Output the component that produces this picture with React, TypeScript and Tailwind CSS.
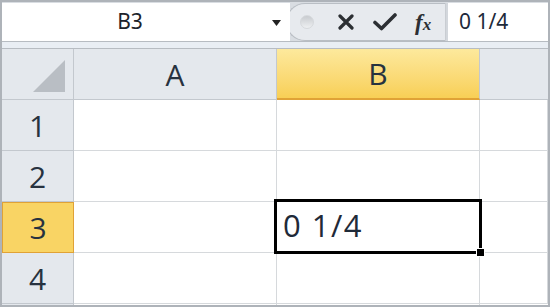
import { ReactNode } from 'react'

const cellFont = { fontFamily: '"Open Sans", "Noto Sans", sans-serif' }
const uiFont = { fontFamily: '"Noto Sans", "DejaVu Sans", sans-serif' }

function HeaderCell({ children, active = false, className = '' }: { children?: ReactNode; active?: boolean; className?: string }) {
  return (
    <div
      className={`flex items-center justify-center text-[30px] text-[#27323f] border-r border-[#c3c8ce] ${
        active
          ? 'bg-gradient-to-b from-[#fde99c] to-[#f8cf55] border-b-2 border-b-[#e0a236]'
          : 'bg-[#e4e8ed] border-b border-b-[#c3c8ce]'
      } ${className}`}
      style={cellFont}
    >
      {children}
    </div>
  )
}

function RowHead({ n, active = false }: { n: number; active?: boolean }) {
  return (
    <div
      className={`flex items-center justify-center text-[30px] text-[#27323f] ${
        active
          ? 'bg-[#f9d464] border border-[#e0a236]'
          : 'bg-[#e4e8ed] border-r border-b border-[#c3c8ce]'
      }`}
      style={cellFont}
    >
      {n}
    </div>
  )
}

function Cell({ children }: { children?: ReactNode }) {
  return <div className="relative border-r border-b border-[#d6d9dc] bg-white">{children}</div>
}

export default function App() {
  const rows = [1, 2, 3, 4]

  return (
    <div className="w-[550px] h-[307px] overflow-hidden bg-[#d9dde2] border-2 border-[#aeb3b9] flex flex-col">
      {/* formula bar */}
      <div className="flex h-[39px] pt-[1px]">
        <div className="relative w-[288px] bg-white flex items-center" style={uiFont}>
          <span className="w-[256px] text-center text-[21px] text-[#1d232b]">B3</span>
          <svg width="9" height="6" viewBox="0 0 9 6" className="absolute left-[270px] top-[17px]">
            <path d="M0 0 H9 L4.5 6 Z" fill="#222" />
          </svg>
        </div>
        <div className="-ml-[4px] w-[160px] flex items-center bg-[#e7eaee] border border-[#b9bec4] border-r-[#c9cdd2] rounded-l-[19px] pl-[13px] gap-[24px]">
          <div className="w-[14px] h-[14px] rounded-full bg-gradient-to-b from-[#c8cbcf] to-[#eef0f2] border border-[#d6d9dc]" />
          <svg width="16" height="16" viewBox="0 0 16 16">
            <path d="M2 2 L14 14 M14 2 L2 14" stroke="#2c2f33" strokeWidth="3.2" strokeLinecap="round" />
          </svg>
          <svg width="24" height="18" viewBox="0 0 24 18" className="-ml-[5px]">
            <path d="M2 9.5 L8.5 15.5 L22 2" stroke="#2c2f33" strokeWidth="3.6" fill="none" strokeLinejoin="round" strokeLinecap="round" />
          </svg>
          <span
            className="-ml-[6px] italic font-bold text-[23px] text-[#2c2f33] leading-none"
            style={{ fontFamily: '"Liberation Serif", serif' }}
          >
            f<span className="text-[17px]">x</span>
          </span>
        </div>
        <div className="flex-1 bg-white border-l-2 border-[#d3d7dc] flex items-center pl-[11px]" style={uiFont}>
          <span className="text-[21px] text-[#1d2a3a]">0 1/4</span>
        </div>
      </div>

      {/* separator band */}
      <div className="h-[8px] border-y border-[#b7bcc2] bg-[#e9eef4]" />

      {/* grid */}
      <div className="flex-1 grid grid-cols-[72px_203px_203px_1fr] grid-rows-[51px_51px_51px_51px_51px_1fr] bg-white">
        <HeaderCell className="relative">
          <svg width="32" height="32" viewBox="0 0 32 32" className="absolute left-[31px] top-[11px]">
            <path d="M32 0 V32 H0 Z" fill="#b9bec4" />
          </svg>
        </HeaderCell>
        <HeaderCell>A</HeaderCell>
        <HeaderCell active>B</HeaderCell>
        <HeaderCell className="border-r-0" />

        {rows.map((r) => (
          <div key={r} className="contents">
            <RowHead n={r} active={r === 3} />
            <Cell />
            <Cell>
              {r === 3 && (
                <div className="absolute z-10 -left-[3px] -top-[3px] -right-[3px] -bottom-[2px] border-[3px] border-black flex items-center pl-[6px] pb-[2px]">
                  <span className="text-[31px] text-[#1f2a38] tracking-[1.5px]" style={cellFont}>
                    0 1/4
                  </span>
                  <div className="absolute -right-[6px] -bottom-[6px] w-[9px] h-[9px] bg-black border border-white" />
                </div>
              )}
            </Cell>
            <Cell />
          </div>
        ))}

        <div className="bg-[#e4e8ed] border-r border-[#c3c8ce]" />
        <div className="border-r border-[#d6d9dc]" />
        <div className="border-r border-[#d6d9dc]" />
        <div />
      </div>
    </div>
  )
}
